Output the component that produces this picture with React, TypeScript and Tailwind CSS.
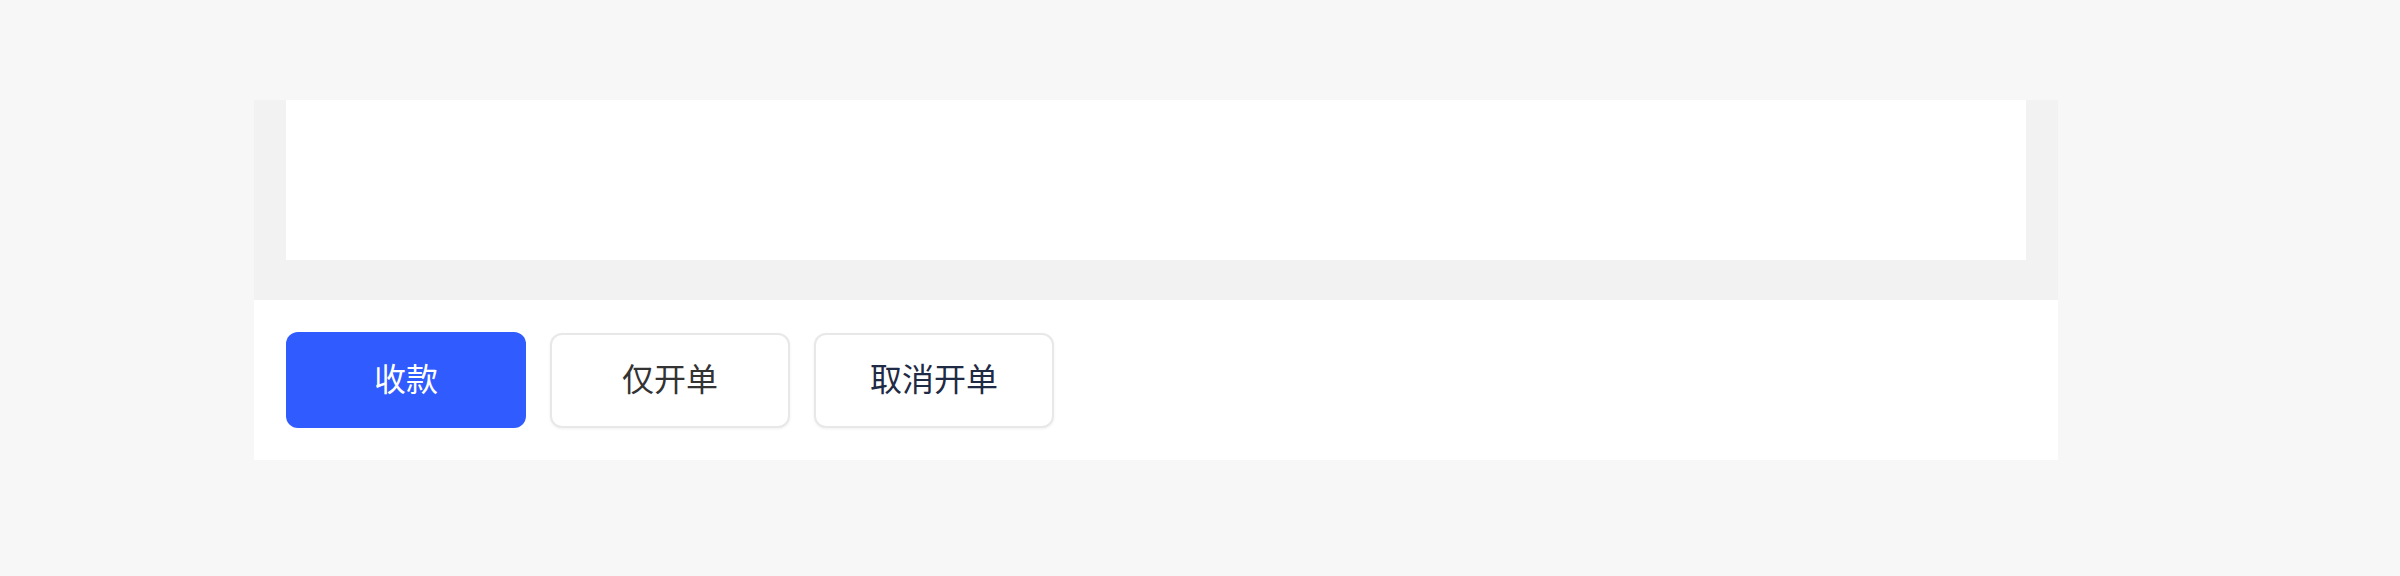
const buttons = [
  { label: '收款', kind: 'primary' },
  { label: '仅开单', kind: 'plain' },
  { label: '取消开单', kind: 'cancel' },
];

export default function App() {
  return (
    <div
      className="min-h-[576px] w-full bg-[#f7f7f7] pl-[254px] pt-[100px]"
      style={{ fontFamily: '"Noto Sans CJK SC", "Noto Sans", sans-serif' }}
    >
      <div className="w-[1804px]">
        <div className="bg-[#f2f2f2] px-8 pb-10">
          <div className="h-[160px] bg-white" />
        </div>
        <div className="flex h-[160px] items-center gap-6 bg-white px-8">
          {buttons.map((b) => (
            <button
              key={b.label}
              className={
                b.kind === 'primary'
                  ? 'flex h-[96px] w-[240px] items-center justify-center rounded-xl bg-[#2f5bff] pb-[6px] text-[32px] leading-none text-white'
                  : b.kind === 'plain'
                  ? 'flex h-[95px] w-[240px] items-center justify-center rounded-xl border-2 border-[#e8e8e8] bg-white pb-[6px] text-[32px] leading-none text-[#333333] shadow-[0_1px_3px_rgba(0,0,0,0.06)]'
                  : 'flex h-[95px] w-[240px] items-center justify-center rounded-xl border-2 border-[#e8e8e8] bg-white pb-[6px] text-[32px] leading-none text-[#1f2a44] shadow-[0_1px_3px_rgba(0,0,0,0.06)]'
              }
            >
              {b.label}
            </button>
          ))}
        </div>
      </div>
    </div>
  );
}
